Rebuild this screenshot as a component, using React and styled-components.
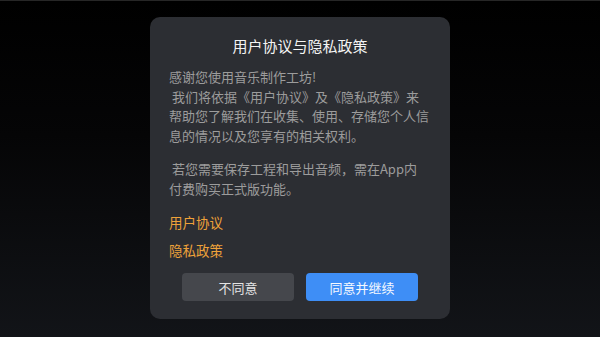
import React from 'react';
import styled, { createGlobalStyle } from 'styled-components';

const GlobalStyle = createGlobalStyle`
  html, body {
    margin: 0;
    padding: 0;
  }
  body {
    font-family: "Noto Sans CJK SC", "Noto Sans", sans-serif;
  }
`;

const Screen = styled.div`
  width: 600px;
  height: 337px;
  box-sizing: border-box;
  border-top: 1px solid #262626;
  background: linear-gradient(180deg, #000000 0%, #050506 40%, #121418 100%);
  display: flex;
  justify-content: center;
  padding-top: 16px;
`;

const Dialog = styled.div`
  width: 300px;
  height: 302px;
  box-sizing: border-box;
  background-color: #2c2e33;
  border-radius: 10px;
  padding: 18px 19px;
  display: flex;
  flex-direction: column;
`;

const Title = styled.h1`
  margin: 0;
  font-size: 15px;
  font-weight: 400;
  line-height: 22px;
  color: #f4f4f4;
  text-align: center;
`;

const Paragraph = styled.p`
  margin: ${({ $top }) => $top}px 0 0;
  font-size: 13px;
  line-height: 19.5px;
  color: #9c9c9c;
  white-space: nowrap;
`;

const LinkText = styled.a`
  display: block;
  margin-top: ${({ $top }) => $top}px;
  font-size: 13.5px;
  line-height: 28px;
  color: #eea23a;
  text-decoration: none;
  cursor: pointer;
`;

const Actions = styled.div`
  display: flex;
  justify-content: center;
  gap: 12px;
  margin-top: 9px;
`;

const Button = styled.button`
  width: 112px;
  height: 28px;
  border: none;
  border-radius: 4px;
  font-family: inherit;
  font-size: 13px;
  cursor: pointer;
  background-color: ${({ $primary }) => ($primary ? '#3e8ef6' : '#45474c')};
  color: ${({ $primary }) => ($primary ? '#f4f8ff' : '#e4e4e4')};
`;

const App = () => {
  return (
    <>
      <GlobalStyle />
      <Screen>
        <Dialog>
          <Title>用户协议与隐私政策</Title>
          <Paragraph $top={10}>
            感谢您使用音乐制作工坊!
            <br />
            &nbsp;我们将依据《用户协议》及《隐私政策》来
            <br />
            帮助您了解我们在收集、使用、存储您个人信
            <br />
            息的情况以及您享有的相关权利。
          </Paragraph>
          <Paragraph $top={14}>
            &nbsp;若您需要保存工程和导出音频，需在App内
            <br />
            付费购买正式版功能。
          </Paragraph>
          <LinkText $top={10}>用户协议</LinkText>
          <LinkText $top={0}>隐私政策</LinkText>
          <Actions>
            <Button>不同意</Button>
            <Button $primary>同意并继续</Button>
          </Actions>
        </Dialog>
      </Screen>
    </>
  );
};

export default App;
